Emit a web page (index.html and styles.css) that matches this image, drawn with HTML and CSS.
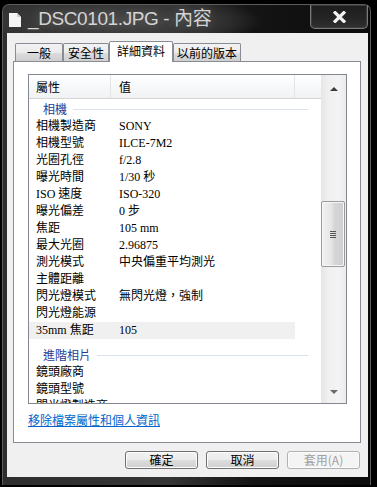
FILE: index.html
```html
<!DOCTYPE html>
<html lang="zh-Hant">
<head>
    <meta charset="UTF-8">
    <title>_DSC0101.JPG - 內容</title>
    <link rel="stylesheet" href="styles.css">
</head>
<body>

    <div class="window">
        <!-- Title bar -->
        <div class="titlebar">
            <svg class="doc-icon" width="12" height="14" viewBox="0 0 12 14">
                <path d="M0 0 H8 L12 4 V14 H0 Z" fill="#f4f4f4"/>
                <path d="M8 0 V4 H12 Z" fill="#cfcfcf"/>
            </svg>
            <span class="title">_DSC0101.JPG - 內容</span>
            <div class="close-btn">
                <svg width="15" height="12" viewBox="0 0 15 12">
                    <path d="M2 0.5 L13 11.5 M13 0.5 L2 11.5" stroke="#f2f2f2" stroke-width="3.2"/>
                </svg>
            </div>
        </div>

        <div class="client">
            <!-- Tabs -->
            <div class="tabs">
                <div class="tab tab-general">一般</div>
                <div class="tab tab-security">安全性</div>
                <div class="tab tab-details active">詳細資料</div>
                <div class="tab tab-versions">以前的版本</div>
            </div>

            <div class="panel">
                <div class="listview">
                    <div class="lv-main">
                        <div class="lv-header">
                            <div class="hd-name">屬性</div>
                            <div class="hd-val">值</div>
                            <div class="hd-rest"></div>
                        </div>
                        <div class="lv-body">
                            <div class="group first"><span>相機</span><i class="group-line"></i></div>
                            <div class="row"><span class="c-name">相機製造商</span><span class="c-val">SONY</span></div>
                            <div class="row"><span class="c-name">相機型號</span><span class="c-val">ILCE-7M2</span></div>
                            <div class="row"><span class="c-name">光圈孔徑</span><span class="c-val">f/2.8</span></div>
                            <div class="row"><span class="c-name">曝光時間</span><span class="c-val">1/30 秒</span></div>
                            <div class="row"><span class="c-name">ISO 速度</span><span class="c-val">ISO-320</span></div>
                            <div class="row"><span class="c-name">曝光偏差</span><span class="c-val">0 步</span></div>
                            <div class="row"><span class="c-name">焦距</span><span class="c-val">105 mm</span></div>
                            <div class="row"><span class="c-name">最大光圈</span><span class="c-val">2.96875</span></div>
                            <div class="row"><span class="c-name">測光模式</span><span class="c-val">中央偏重平均測光</span></div>
                            <div class="row"><span class="c-name">主體距離</span><span class="c-val"></span></div>
                            <div class="row"><span class="c-name">閃光燈模式</span><span class="c-val">無閃光燈，強制</span></div>
                            <div class="row"><span class="c-name">閃光燈能源</span><span class="c-val"></span></div>
                            <div class="row hl"><span class="c-name">35mm 焦距</span><span class="c-val">105</span></div>
                            <div class="group"><span>進階相片</span><i class="group-line"></i></div>
                            <div class="row"><span class="c-name">鏡頭廠商</span><span class="c-val"></span></div>
                            <div class="row"><span class="c-name">鏡頭型號</span><span class="c-val"></span></div>
                            <div class="row"><span class="c-name">閃光燈製造商</span><span class="c-val"></span></div>
                        </div>
                    </div>
                    <!-- Vertical scrollbar -->
                    <div class="scrollbar">
                        <div class="sb-arrow"><i class="tri-up"></i></div>
                        <div class="sb-track">
                            <div class="sb-thumb">
                                <div class="grip"><i></i><i></i><i></i><i></i></div>
                            </div>
                        </div>
                        <div class="sb-arrow"><i class="tri-down"></i></div>
                    </div>
                </div>
                <a class="strip-link" href="#">移除檔案屬性和個人資訊</a>
            </div>

            <!-- Dialog buttons -->
            <div class="buttons">
                <button class="btn">確定</button>
                <button class="btn">取消</button>
                <button class="btn disabled">套用(A)</button>
            </div>
        </div>
    </div>

</body>
</html>
```

FILE: styles.css
```css
/* Window frame */
body {
    margin: 0;
    padding: 4px 0 0 2px;
    background: #000;
    width: 377px;
    height: 487px;
    box-sizing: border-box;
    overflow: hidden;
    font-family: "Noto Sans CJK TC", sans-serif;
}
.window {
    width: 369px;
    height: 481px;
    box-sizing: border-box;
    border: 1px solid #5c5c5c;
    border-bottom: none;
    border-radius: 7px 7px 0 0;
    padding: 0 2px 7px 4px;
    background: linear-gradient(to right, #2e2e2e 0%, #353535 45%, #141414 68%, #0c0c0c 100%);
}
.titlebar {
    height: 28px;
    display: flex;
    align-items: flex-start;
    margin-left: -4px;
    margin-right: -2px;
    background: radial-gradient(ellipse 150px 26px at 110px 16px, #4a4a4a 0%, #383838 60%, rgba(40, 40, 40, 0) 100%);
}
.doc-icon {
    margin: 8px 0 0 6px;
}
.title {
    margin: 2px 0 0 7px;
    font-family: "Liberation Sans", "Noto Sans CJK TC", sans-serif;
    font-size: 19px;
    line-height: 24px;
    letter-spacing: -0.4px;
    color: #d4d4d4;
    text-shadow: 0 0 8px rgba(120, 120, 120, 0.6);
}
.close-btn {
    margin-left: auto;
    margin-right: 2px;
    width: 58px;
    height: 24px;
    box-sizing: border-box;
    border: 1px solid #7a7a7a;
    border-top: none;
    border-radius: 0 0 5px 5px;
    background: linear-gradient(#1c1c1c, #262626 60%, #303030);
    box-shadow: inset 0 0 0 1px #3c3c3c;
    display: flex;
    align-items: center;
    justify-content: center;
}
.close-btn svg {
    margin-top: 1px;
}

/* Client area */
.client {
    width: 361px;
    height: 444px;
    background: #f0f0f0;
}
.tabs {
    height: 28px;
    display: flex;
    align-items: flex-end;
    padding-left: 8px;
    position: relative;
    z-index: 1;
}
.tab {
    height: 18px;
    box-sizing: border-box;
    border: 1px solid #898c95;
    border-bottom: none;
    border-radius: 2px 2px 0 0;
    background: linear-gradient(#f3f3f3 0%, #ebebeb 50%, #dddddd 51%, #cfcfcf 100%);
    font-size: 12px;
    line-height: 17px;
    text-align: center;
    color: #000;
}
.tab-general { width: 48px; }
.tab-security { width: 46px; }
.tab-details { width: 64px; }
.tab-versions { width: 68px; }
.tab.active {
    height: 21px;
    margin-bottom: -1px;
    background: #fff;
    line-height: 17px;
}
.panel {
    margin-left: 6px;
    width: 348px;
    height: 382px;
    box-sizing: border-box;
    border: 1px solid #898c95;
    background: #fff;
}

/* List view */
.listview {
    margin: 12px 0 0 14px;
    width: 319px;
    height: 330px;
    box-sizing: border-box;
    border: 1px solid #828790;
    display: flex;
    overflow: hidden;
}
.lv-main {
    width: 292px;
    overflow: hidden;
}
.lv-header {
    height: 24px;
    box-sizing: border-box;
    display: flex;
    border-bottom: 1px solid #d5d5d5;
    background: linear-gradient(#ffffff, #f7f8f9 50%, #f1f2f4);
    font-size: 12px;
    line-height: 23px;
}
.hd-name {
    width: 82px;
    box-sizing: border-box;
    padding-left: 7px;
    border-right: 1px solid #e3e5e8;
}
.hd-val {
    width: 184px;
    box-sizing: border-box;
    padding-left: 8px;
    border-right: 1px solid #e3e5e8;
}
.hd-rest {
    flex: 1;
}
.lv-body {
    font-family: "Liberation Serif", "Noto Sans CJK TC", serif;
    font-size: 12px;
    color: #000;
}
.group {
    height: 19px;
    display: flex;
    align-items: center;
    padding-left: 14px;
    margin-top: 6px;
    font-family: "Noto Sans CJK TC", sans-serif;
    color: #1e3c96;
}
.group.first {
    margin-top: 0;
}
.group-line {
    flex: 1;
    height: 1px;
    margin: 1px 13px 0 6px;
    background: #d9e1ea;
}
.row {
    height: 17px;
    line-height: 17px;
    display: flex;
    white-space: nowrap;
}
.c-name {
    width: 82px;
    box-sizing: border-box;
    padding-left: 7px;
}
.c-val {
    width: 184px;
    box-sizing: border-box;
    padding-left: 8px;
}
.row.hl .c-name,
.row.hl .c-val {
    background: #f0f0f0;
}

/* Scrollbar */
.scrollbar {
    width: 25px;
    display: flex;
    flex-direction: column;
    background: linear-gradient(to right, #e6e6e6, #f0f0f0 30%, #f3f3f3 70%, #ebebeb);
}
.sb-arrow {
    height: 24px;
    display: flex;
    align-items: center;
    justify-content: center;
}
.tri-up {
    width: 0;
    height: 0;
    border-left: 4px solid transparent;
    border-right: 4px solid transparent;
    border-bottom: 4px solid #3c3c3c;
    margin-top: 4px;
}
.tri-down {
    width: 0;
    height: 0;
    border-left: 4px solid transparent;
    border-right: 4px solid transparent;
    border-top: 4px solid #6a6a6a;
    margin-top: 2px;
}
.sb-track {
    flex: 1;
    padding-top: 102px;
}
.sb-thumb {
    margin: 0 1px 0 0;
    height: 66px;
    box-sizing: border-box;
    border: 1px solid #9a9a9a;
    border-radius: 2px;
    background: linear-gradient(to right, #f2f2f2, #e4e4e4 45%, #d6d6d6 55%, #cfcfcf);
    box-shadow: inset 0 0 0 1px #f7f7f7;
    display: flex;
    align-items: center;
    justify-content: center;
}
.grip {
    display: flex;
    flex-direction: column;
    gap: 1px;
}
.grip i {
    display: block;
    width: 6px;
    height: 1px;
    background: #555;
}

.strip-link {
    display: inline-block;
    margin: 8px 0 0 14px;
    font-size: 12px;
    line-height: 16px;
    color: #0066cc;
    text-decoration: underline;
}

/* Buttons */
.buttons {
    display: flex;
    justify-content: flex-end;
    gap: 8px;
    padding-right: 8px;
    margin-top: 8px;
}
.btn {
    width: 73px;
    height: 18px;
    padding: 0;
    border: 1px solid #707070;
    border-radius: 3px;
    background: linear-gradient(#f2f2f2 0%, #ebebeb 50%, #dddddd 51%, #cfcfcf 100%);
    box-shadow: inset 0 0 0 1px #fcfcfc;
    font-family: "Noto Sans CJK TC", sans-serif;
    font-size: 12px;
    line-height: 16px;
    color: #000;
}
.btn.disabled {
    border-color: #adb2b5;
    background: #f4f4f4;
    color: #a0a0a0;
}
```
